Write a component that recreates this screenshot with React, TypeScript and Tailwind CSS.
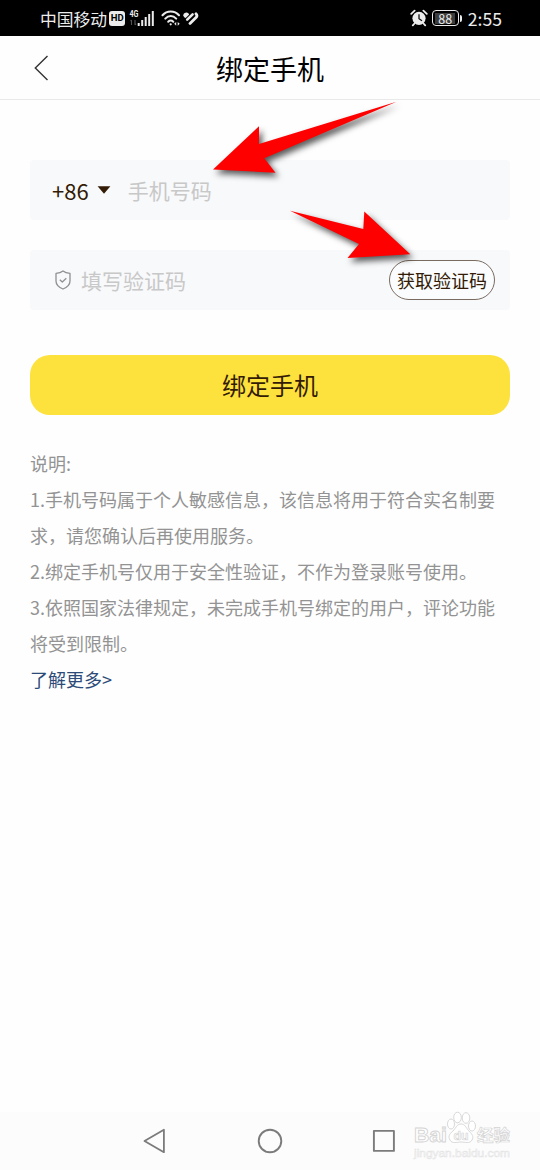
import React from "react";

const StatusBar = () => {
  return (
    <div className="flex h-9 items-center justify-between bg-black pl-10 pr-[38px] text-[#ececec]">
      <div className="flex items-center">
        <span className="pt-0.5 text-[16.8px] leading-6">中国移动</span>
        <span className="ml-[2px] flex h-[15px] w-[16px] items-center justify-center rounded-[3px] bg-[#ececec] font-['Roboto',sans-serif] text-[9.5px] font-bold leading-none text-black">
          HD
        </span>
        <svg className="ml-[4px]" width="26" height="20" viewBox="0 0 26 20">
          <text
            x="0.5"
            y="9"
            fill="#ececec"
            fontSize="9"
            fontWeight="700"
            fontFamily="Roboto, sans-serif"
            textLength="9"
            lengthAdjust="spacingAndGlyphs"
          >
            4G
          </text>
          <path d="M2.500 17v-5M1.500 13.200l1-1.200M6 12v5M7 15.800 6 17" stroke="#555" strokeWidth="1.100" fill="none" />
          <path d="M9.700 15v3M13.200 12v6M16.700 9v9M20.200 6v12M23.800 3v15" stroke="#ececec" strokeWidth="2" />
        </svg>
        <svg className="ml-1.5" width="20" height="18" viewBox="0 0 20 18" fill="none" stroke="#ececec" strokeLinecap="round">
          <path d="M1.500 6.200C6 1.300 13.500 1.300 18 6.200" strokeWidth="2.100" />
          <path d="M4.300 9.600c3.200-3.400 7.700-3.400 10.900 0" strokeWidth="2.100" />
          <path d="M7.200 12.700c1.600-1.600 3.500-1.600 5.100 0" strokeWidth="2" />
          <circle cx="9.700" cy="15.300" r="1.100" fill="#ececec" stroke="none" />
          <path d="M13.200 14.800l2-1.900v3.800zM18.700 14.800l-2-1.900v3.800z" fill="#ececec" stroke="none" />
        </svg>
        <svg className="ml-[1px]" width="17" height="15" viewBox="0 0 17 15" fill="none" stroke="#ececec" strokeLinecap="round">
          <path d="M2.300 4.300c.2-1.700 2.300-2 3.600-1L3.400 5.800z" strokeWidth="2.200" strokeLinejoin="round" fill="#ececec" />
          <path d="M5.200 8.700 10.600 3.300" strokeWidth="2.600" />
          <path d="M8 12.400 14 6.600c1-1.100 1-2.800 0-3.800" strokeWidth="2.800" />
        </svg>
      </div>
      <div className="flex items-center">
        <svg width="18" height="18" viewBox="0 0 18 18" fill="none">
          <circle cx="9" cy="9.300" r="6.600" fill="#ececec" />
          <path d="M1.200 4.800 4.600 1.700M16.800 4.800l-3.400-3.100M4.500 14.500l-1.700 1.900M13.500 14.500l1.700 1.900" stroke="#ececec" strokeWidth="1.800" strokeLinecap="round" />
          <path d="M9 5.200v4.500l3 2" stroke="#111" strokeWidth="1.300" />
        </svg>
        <div className="ml-[4px] flex h-[16px] w-[27px] items-center justify-center rounded-[4px] border-[1.5px] border-[#ececec]">
          <span className="bg-[#3d3d3d] px-[3px] text-[12.5px] leading-[11px]">88</span>
        </div>
        <div className="ml-[1px] h-[7px] w-[2px] rounded-r bg-[#ececec]" />
        <span className="ml-[6px] pt-0.5 text-[17.6px] leading-6">2:55</span>
      </div>
    </div>
  );
};

const Header = () => {
  return (
    <header className="grid h-16 grid-cols-[90px_1fr_90px] items-center border-b border-[#e9e9e9]">
      <svg className="ml-[34px]" width="16" height="26" viewBox="0 0 16 26" fill="none">
        <path d="M13.500 1 1.300 13l12.200 12" stroke="#333" strokeWidth="1.400" />
      </svg>
      <h1 className="pt-0.5 text-center text-[27px] leading-10 text-black">绑定手机</h1>
    </header>
  );
};

const PhoneForm = () => {
  return (
    <form className="flex flex-col">
      <div className="flex h-[60px] items-center rounded-sm bg-[#f8f9fb] pl-[22px]">
        <span className="text-[22px] text-[#331b05]">+86</span>
        <svg className="ml-2" width="14" height="8" viewBox="0 0 14 8">
          <path d="M.6.2h12.800L7 7.800z" fill="#331b05" />
        </svg>
        <span className="ml-[17px] pt-0.5 text-[21px] text-[#c8c8c8]">手机号码</span>
      </div>
      <div className="mt-[30px] flex h-[60px] items-center rounded-sm bg-[#f8f9fb] pl-6 pr-[15px]">
        <svg width="18" height="20" viewBox="0 0 18 20" fill="none" stroke="#8f9092" strokeWidth="1.300" strokeLinejoin="round">
          <path d="M9 1c2 1.600 4.400 2.200 7 2.400V11c0 4-3 6.300-7 8-4-1.700-7-4-7-8V3.400C4.600 3.200 7 2.600 9 1z" />
          <path d="M5.800 9.700 8.300 12l4-3.800" />
        </svg>
        <span className="ml-[9px] pt-0.5 text-[21px] text-[#c8c8c8]">填写验证码</span>
        <button
          type="button"
          className="ml-auto h-10 w-[106px] rounded-full border border-[#796b60] bg-[#fbfcfd] text-[18px] text-[#331b05]"
        >
          获取验证码
        </button>
      </div>
      <button type="button" className="mt-[45px] h-[60px] rounded-[20px] bg-[#fde13d] text-2xl text-[#331b05]">
        绑定手机
      </button>
    </form>
  );
};

const Notes = () => {
  return (
    <div className="mt-[30px] text-[18px] leading-9 text-[#939393]">
      <p>说明:</p>
      <p>
        1.手机号码属于个人敏感信息，该信息将用于符合实名制要
        <br />
        求，请您确认后再使用服务。
      </p>
      <p>2.绑定手机号仅用于安全性验证，不作为登录账号使用。</p>
      <p>
        3.依照国家法律规定，未完成手机号绑定的用户，评论功能
        <br />
        将受到限制。
      </p>
      <a className="block text-[#2c4b78]" href="#more">
        了解更多&gt;
      </a>
    </div>
  );
};

// red pointers drawn over the form
const Arrows = () => {
  return (
    <svg
      className="pointer-events-none absolute left-0 top-0 drop-shadow-[3px_4px_3px_rgba(0,0,0,0.65)]"
      width="540"
      height="320"
      viewBox="0 0 540 320"
      fill="#fe0000"
    >
      <path d="M213 169.500 259 126.300V144L396.500 101.700 264.300 158.300 275.500 172.700z" />
      <path d="M290 210.700 363.300 229 364.300 211.500 410.300 254.300 347.500 258 359 244z" />
    </svg>
  );
};

const Watermark = () => {
  return (
    <svg
      className="absolute bottom-2 left-[412px]"
      width="102"
      height="52"
      viewBox="0 0 102 52"
      fill="#fff"
      stroke="#d4d4d4"
      strokeWidth="0.900"
      fontFamily="Liberation Sans, Noto Sans CJK SC, sans-serif"
      fontWeight="700"
    >
      <text x="2" y="32" fontSize="21" textLength="33" lengthAdjust="spacingAndGlyphs">Bai</text>
      <ellipse cx="39" cy="14" rx="3.500" ry="5" />
      <ellipse cx="45.500" cy="7.500" rx="3.800" ry="5.300" />
      <ellipse cx="54" cy="8" rx="3.800" ry="5.300" />
      <ellipse cx="60" cy="16" rx="3.500" ry="5" />
      <path d="M49 14c-4 0-5 4-8 7-4 3-5 6-3 9 2 4 7 2 11 2s9 2 11-2c2-3 0-6-3-9-3-3-4-7-8-7z" />
      <text x="41.500" y="29.500" fontSize="13" strokeWidth="0.700" textLength="15" lengthAdjust="spacingAndGlyphs">du</text>
      <text x="65" y="30.500" fontSize="16" strokeWidth="0.700" textLength="33" lengthAdjust="spacingAndGlyphs">经验</text>
      <text x="2" y="46.500" fontSize="10" fontWeight="400" fill="#f8f8f8" stroke="#e2e2e2" strokeWidth="0.400" textLength="96" lengthAdjust="spacingAndGlyphs">
        jingyan.baidu.com
      </text>
    </svg>
  );
};

const NavBar = () => {
  return (
    <nav className="relative flex h-[58px] items-center bg-[#fcfcfc] pl-[143px]">
      <svg width="22" height="26" viewBox="0 0 22 26" fill="none" stroke="#7b7b7b" strokeWidth="1.800" strokeLinejoin="round">
        <path d="M20.900 1.800v22.400L1.500 13z" />
      </svg>
      <svg className="ml-[92px]" width="26" height="26" viewBox="0 0 26 26" fill="none" stroke="#7b7b7b" strokeWidth="1.900">
        <circle cx="13" cy="13" r="11.300" />
      </svg>
      <svg className="ml-[89px]" width="24" height="24" viewBox="0 0 24 24" fill="none" stroke="#7b7b7b" strokeWidth="1.900" strokeLinejoin="round">
        <rect x="1.900" y="1.900" width="20" height="20" />
      </svg>
      <Watermark />
    </nav>
  );
};

export default function App() {
  return (
    <div
      lang="zh-CN"
      className="relative flex h-[1170px] w-[540px] flex-col overflow-hidden bg-[#fefefe] font-['Noto_Sans_CJK_SC',sans-serif]"
    >
      <StatusBar />
      <Header />
      <main className="flex-1 px-[30px] pt-[60px]">
        <PhoneForm />
        <Notes />
      </main>
      <NavBar />
      <Arrows />
    </div>
  );
}
